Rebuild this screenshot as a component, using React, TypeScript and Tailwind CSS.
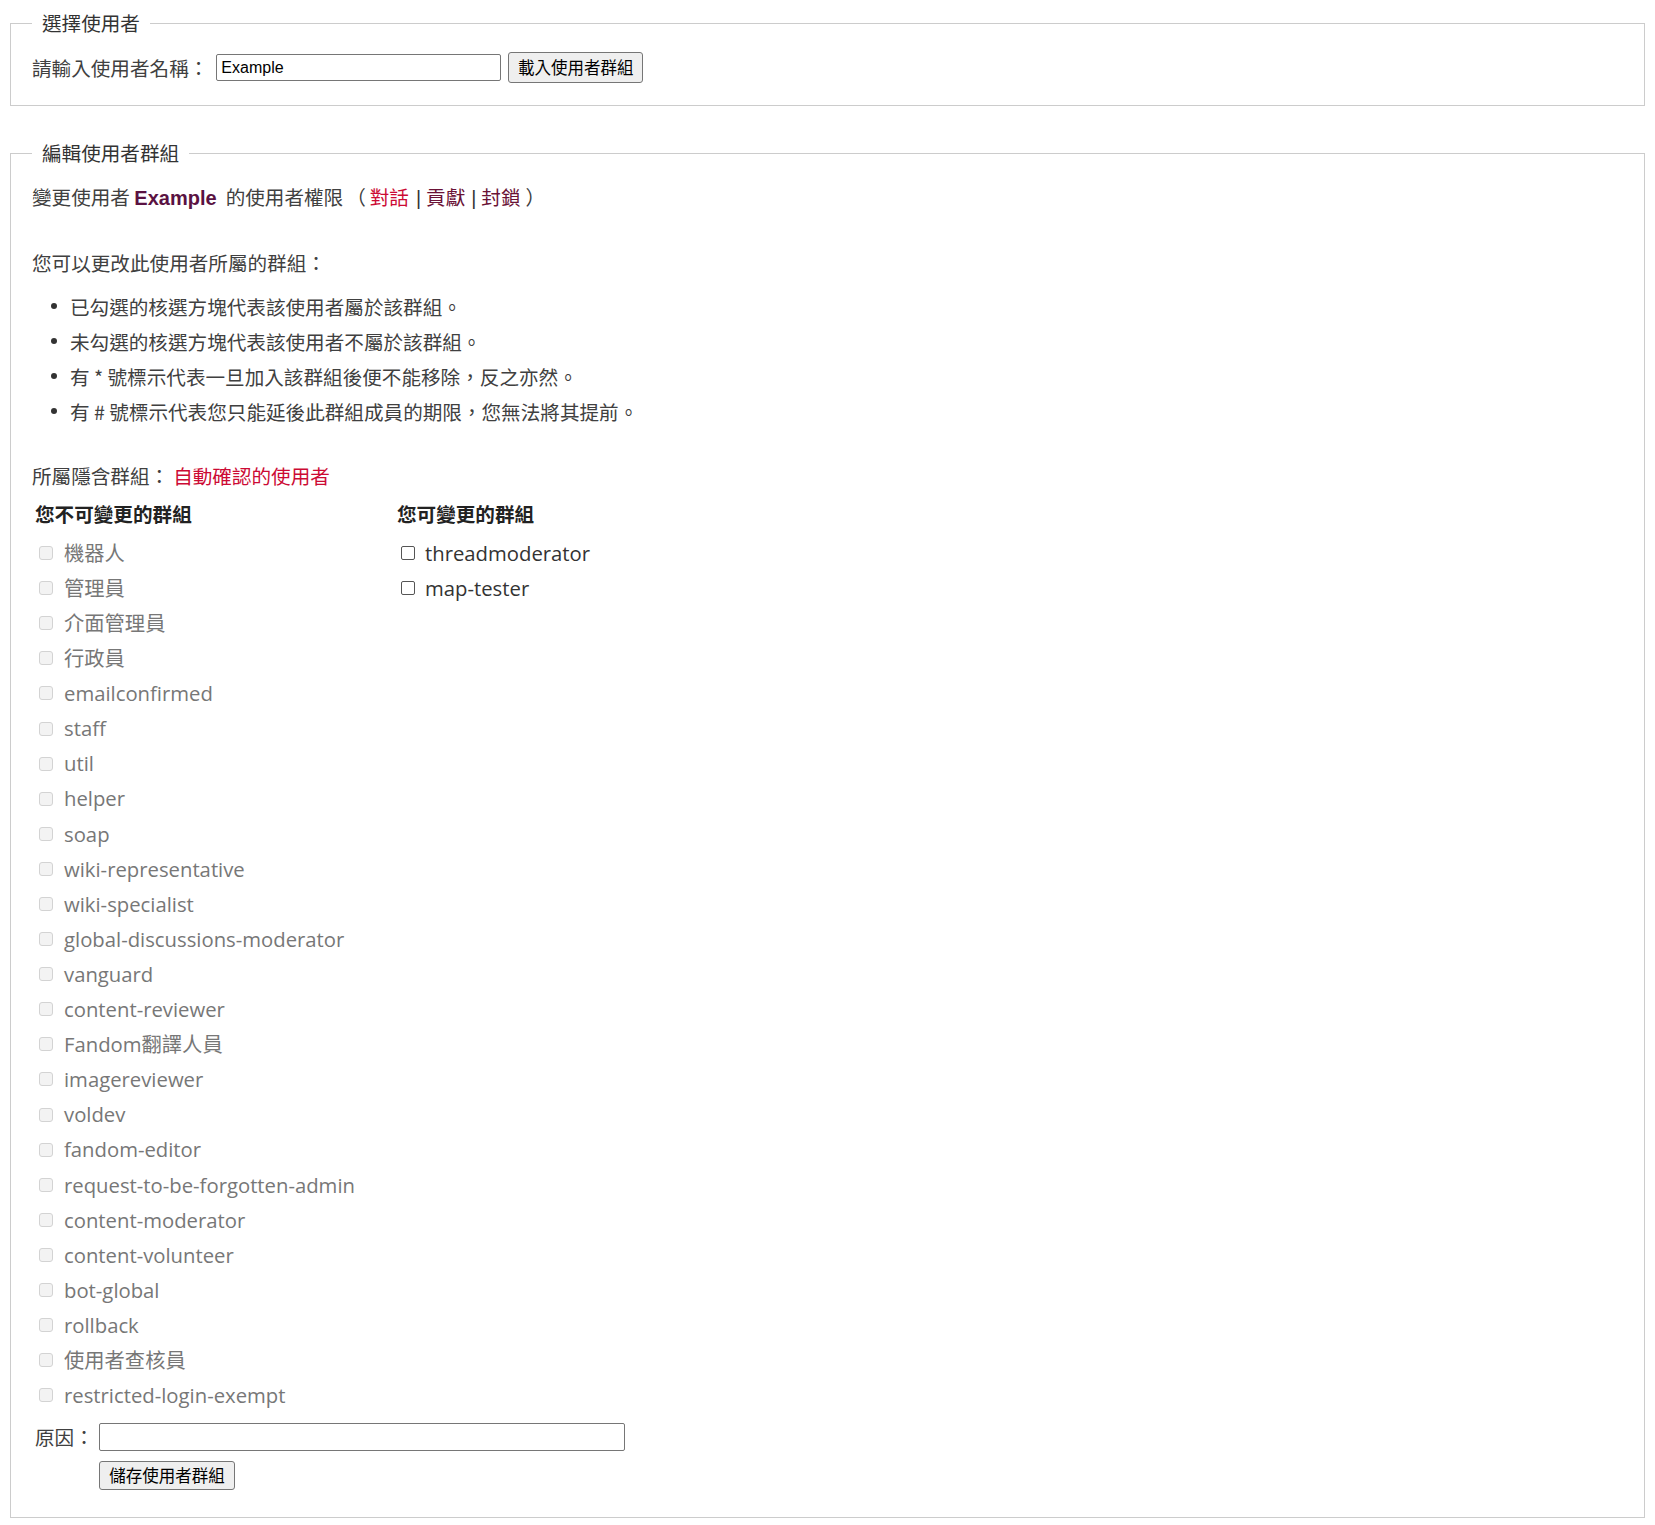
import React from 'react';

const fixedGroups = [
  '機器人',
  '管理員',
  '介面管理員',
  '行政員',
  'emailconfirmed',
  'staff',
  'util',
  'helper',
  'soap',
  'wiki-representative',
  'wiki-specialist',
  'global-discussions-moderator',
  'vanguard',
  'content-reviewer',
  'Fandom翻譯人員',
  'imagereviewer',
  'voldev',
  'fandom-editor',
  'request-to-be-forgotten-admin',
  'content-moderator',
  'content-volunteer',
  'bot-global',
  'rollback',
  '使用者查核員',
  'restricted-login-exempt',
];

const editableGroups = ['threadmoderator', 'map-tester'];

const notes = [
  '已勾選的核選方塊代表該使用者屬於該群組。',
  '未勾選的核選方塊代表該使用者不屬於該群組。',
  '有 * 號標示代表一旦加入該群組後便不能移除，反之亦然。',
  '有 # 號標示代表您只能延後此群組成員的期限，您無法將其提前。',
];

function GroupRow({ label, disabled }: { label: string; disabled?: boolean }) {
  return (
    <label className="flex h-[35.1px] items-center">
      <span
        className={
          disabled
            ? 'ml-[4px] h-[14px] w-[14px] rounded-[3px] border border-[#d3d3d3] bg-[#f3f3f3]'
            : 'ml-[4px] h-[14px] w-[14px] rounded-[2px] border border-[#555555] bg-white'
        }
      />
      <span
        className={
          disabled
            ? "ml-[11px] text-[20.3px] text-[#777777] font-['Open_Sans','Noto_Sans_CJK_TC',sans-serif]"
            : "ml-[10px] text-[20.3px] text-[#333333] font-['Open_Sans','Noto_Sans_CJK_TC',sans-serif]"
        }
      >
        {label}
      </span>
    </label>
  );
}

export default function App() {
  return (
    <div className="min-h-screen bg-white px-[10px] text-[19.6px] text-[#404040] font-['Noto_Sans_CJK_TC','Noto_Sans_CJK_SC',sans-serif]">
      {/* 選擇使用者 */}
      <fieldset className="mt-[9px] border border-[#cccccc] px-[21px] pt-[15px] pb-[22px]">
        <legend className="px-[10px] leading-[28px] text-[#333333]">選擇使用者</legend>
        <div className="flex h-[31px] items-center">
          <span className="mr-[8px]">請輸入使用者名稱：</span>
          <input
            type="text"
            defaultValue="Example"
            className="h-[27px] w-[285px] rounded-[2px] border border-[#767676] bg-white px-[4px] text-[16px] text-black outline-none font-['Liberation_Sans',Arial,sans-serif]"
          />
          <button className="ml-[7px] h-[31px] w-[135px] rounded-[3px] border border-[#767676] bg-[#efefef] text-[16.5px] text-black">
            載入使用者群組
          </button>
        </div>
      </fieldset>

      {/* 編輯使用者群組 */}
      <fieldset className="mt-[33px] border border-[#cccccc] px-[21px] pt-[15px] pb-[27px]">
        <legend className="px-[10px] leading-[28px] text-[#333333]">編輯使用者群組</legend>

        <p className="leading-[30px]">
          變更使用者{' '}
          <b className="text-[20px] text-[#5a1242] font-['Liberation_Sans',Arial,sans-serif]">Example</b>
          <span className="ml-[9px]">的使用者權限</span>
          <span className="ml-[3px]">（</span>
          <a className="ml-[4px] text-[#cc0a34]">對話</a>
          <span className="ml-[7px] mr-[5px] text-[#333333] font-['Liberation_Sans',Arial,sans-serif]">|</span>
          <a className="text-[#6a1236]">貢獻</a>
          <span className="ml-[6px] mr-[5px] text-[#333333] font-['Liberation_Sans',Arial,sans-serif]">|</span>
          <a className="text-[#6a1236]">封鎖</a>
          <span className="ml-[5px]">）</span>
        </p>

        <p className="mt-[35px] leading-[30px]">您可以更改此使用者所屬的群組：</p>

        <ul className="mt-[10.5px]">
          {notes.map((n) => (
            <li key={n} className="flex items-center leading-[35px]">
              <span className="ml-[19px] mr-[13px] h-[6px] w-[6px] rounded-full bg-[#333333]" />
              {n}
            </li>
          ))}
        </ul>

        <p className="mt-[32.5px] leading-[30px]">
          所屬隱含群組：<a className="ml-[4px] text-[#cc0a34]">自動確認的使用者</a>
        </p>

        <div className="mt-[8px] flex">
          <div className="w-[362px] px-[3px]">
            <h3 className="font-bold leading-[30px] text-[#222222]">您不可變更的群組</h3>
            <div className="mt-[6.5px]">
              {fixedGroups.map((g) => (
                <GroupRow key={g} label={g} disabled />
              ))}
            </div>
          </div>
          <div className="px-[3px]">
            <h3 className="font-bold leading-[30px] text-[#222222]">您可變更的群組</h3>
            <div className="mt-[6.5px]">
              {editableGroups.map((g) => (
                <GroupRow key={g} label={g} />
              ))}
            </div>
          </div>
        </div>

        <div className="mt-[9px] flex items-center">
          <span className="ml-[3px] w-[64px]">原因：</span>
          <input
            type="text"
            className="h-[28px] w-[526px] rounded-[2px] border border-[#767676] bg-white px-[4px] text-[16px] outline-none"
          />
        </div>
        <button className="ml-[67px] mt-[10px] h-[29px] w-[136px] rounded-[3px] border border-[#767676] bg-[#efefef] text-[16.5px] text-black">
          儲存使用者群組
        </button>
      </fieldset>
    </div>
  );
}
